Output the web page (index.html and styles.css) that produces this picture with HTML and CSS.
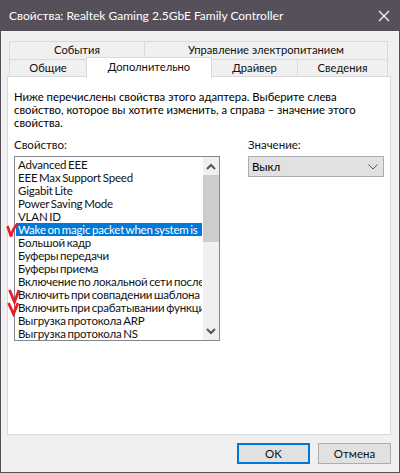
FILE: index.html
```html
<!DOCTYPE html>
<html lang="ru">
<head>
<meta charset="utf-8">
<title>Свойства</title>
<link rel="stylesheet" href="styles.css">
</head>
<body>
<div class="window">
  <header class="titlebar">
    <span class="title">Свойства: Realtek Gaming 2.5GbE Family Controller</span>
    <svg class="close" width="12" height="12" viewBox="0 0 12 12"><path d="M1 1L11 11M11 1L1 11" stroke="#fff" stroke-width="1.1" fill="none"/></svg>
  </header>
  <div class="content">
    <div class="tabs">
      <div class="tabrow top">
        <div class="tab t-events">События</div>
        <div class="tab t-power">Управление электропитанием</div>
      </div>
      <div class="tabrow bottom">
        <div class="tab t-general">Общие</div>
        <div class="tab active t-adv">Дополнительно</div>
        <div class="tab t-driver">Драйвер</div>
        <div class="tab t-info">Сведения</div>
      </div>
    </div>
    <main class="panel">
      <p class="intro">Ниже перечислены свойства этого адаптера. Выберите слева свойство, которое вы хотите изменить, а справа – значение этого свойства.</p>
      <div class="columns">
        <section class="col-left">
          <div class="label">Свойство:</div>
          <div class="listbox">
            <ul class="items">
              <li>Advanced EEE</li>
              <li>EEE Max Support Speed</li>
              <li>Gigabit Lite</li>
              <li>Power Saving Mode</li>
              <li>VLAN ID</li>
              <li class="selected">Wake on magic packet when system is</li>
              <li>Большой кадр</li>
              <li>Буферы передачи</li>
              <li>Буферы приема</li>
              <li>Включение по локальной сети после</li>
              <li>Включить при совпадении шаблона</li>
              <li>Включить при срабатывании функции</li>
              <li>Выгрузка протокола ARP</li>
              <li>Выгрузка протокола NS</li>
            </ul>
            <div class="scrollbar">
              <svg class="arrow" width="16" height="18" viewBox="0 0 16 18"><path d="M4 12L8 8L12 12" stroke="#555" stroke-width="2" fill="none"/></svg>
              <div class="track"><div class="thumb"></div></div>
              <svg class="arrow" width="16" height="17" viewBox="0 0 16 17"><path d="M4 6L8 10L12 6" stroke="#555" stroke-width="2" fill="none"/></svg>
            </div>
          </div>
        </section>
        <section class="col-right">
          <div class="label">Значение:</div>
          <div class="select">
            <span>Выкл</span>
            <svg width="10" height="6" viewBox="0 0 10 6"><path d="M0.5 0.5L5 5L9.5 0.5" stroke="#555" stroke-width="1" fill="none"/></svg>
          </div>
        </section>
      </div>
    </main>
    <footer class="buttons">
      <button class="btn default">OK</button>
      <button class="btn">Отмена</button>
    </footer>
  </div>
  <svg class="mark m1" width="18" height="18" viewBox="0 0 18 18"><path d="M1.5 4L5 14.5C6 9 8 5.5 11.5 2" stroke="#ee1c25" stroke-width="2.6" fill="none"/></svg>
  <svg class="mark m2" width="18" height="18" viewBox="0 0 18 18"><path d="M1.5 2L6.5 14L11 2" stroke="#ee1c25" stroke-width="2.8" fill="none"/></svg>
  <svg class="mark m3" width="18" height="18" viewBox="0 0 18 18"><path d="M1.5 2L6.5 13L11 2" stroke="#ee1c25" stroke-width="2.8" fill="none"/></svg>
</div>
</body>
</html>
```

FILE: styles.css
```css
* { box-sizing: border-box; }
html, body { margin: 0; padding: 0; }
body {
  width: 400px;
  height: 473px;
  overflow: hidden;
  font-family: Lato, Roboto, sans-serif;
  font-size: 11.5px;
  color: #000;
}
.window {
  position: relative;
  width: 400px;
  height: 473px;
  display: flex;
  flex-direction: column;
  background: #f0f0f0;
  border: 1px solid #55505a;
  border-top: 0;
}
.titlebar {
  flex: none;
  height: 31px;
  margin: 0 -1px;
  background: #55505a;
  color: #fff;
  display: flex;
  align-items: center;
  justify-content: space-between;
  padding: 0 10px 0 9px;
  font-size: 12px;
}
.content {
  flex: 1;
  display: flex;
  flex-direction: column;
  padding: 10px 8px 8px 6px;
}
.tabs { flex: none; display: flex; flex-direction: column; padding: 0 1px 0 2px; }
.tabrow { display: flex; height: 18px; }
.tabrow.bottom { height: 17px; position: relative; z-index: 2; }
.tab {
  background: #f0f0f0;
  border: 1px solid #d9d9d9;
  border-bottom: 0;
  margin-left: -1px;
  display: flex;
  align-items: center;
  justify-content: center;
  color: #111;
  font-size: 11.2px;
  line-height: 16px;
  padding-bottom: 1px;
}
.tab:first-child { margin-left: 0; }
.t-events { width: 136px; }
.t-power { width: 244px; }
.t-general { width: 78px; }
.t-adv { width: 126px; }
.t-driver { width: 87px; }
.t-info { width: 91px; }
.tab.active {
  height: 21px;
  margin-top: -2px;
  background: #fff;
  padding-bottom: 3px;
  position: relative;
  z-index: 3;
}
.panel {
  flex: none;
  height: 359px;
  background: #fff;
  border: 1px solid #d9d9d9;
  padding: 13px 6px 0 6px;
}
.intro {
  margin: 0;
  width: 345px;
  font-size: 11.3px;
  line-height: 13px;
}
.columns {
  display: flex;
  margin-top: 9px;
  gap: 28px;
}
.label { height: 18px; line-height: 13px; color: #111; }
.col-left { width: 206px; }
.col-right { width: 138px; }
.listbox {
  display: flex;
  gap: 1px;
  height: 185px;
  border: 1px solid #828790;
  padding: 0 0 0 1px;
  background: #fff;
}
.items {
  list-style: none;
  margin: 0;
  padding: 1px 0 0;
  flex: 1;
  min-width: 0;
  overflow: hidden;
}
.items li {
  height: 13px;
  line-height: 13px;
  padding-left: 2px;
  white-space: nowrap;
  overflow: hidden;
  word-spacing: -1px;
  letter-spacing: -0.2px;
  color: #111;
}
.items li.selected { background: #0078d7; color: #fff; }
.scrollbar {
  flex: none;
  width: 16px;
  display: flex;
  flex-direction: column;
  background: #f0f0f0;
}
.arrow { flex: none; display: block; }
.track { flex: 1; }
.thumb { height: 67px; background: #cdcdcd; }
.select {
  height: 21px;
  background: #e1e1e1;
  border: 1px solid #adadad;
  display: flex;
  align-items: center;
  justify-content: space-between;
  padding: 0 5px 0 3px;
}
.buttons {
  flex: none;
  display: flex;
  justify-content: flex-end;
  gap: 8px;
  margin-top: 8px;
}
.btn {
  width: 73px;
  height: 21px;
  background: #e1e1e1;
  border: 1px solid #adadad;
  font: inherit;
  color: #111;
  padding: 0;
}
.btn.default { border: 2px solid #0078d7; }
.mark { position: absolute; }
.m1 { left: 5px; top: 222px; }
.m2 { left: 7px; top: 288px; }
.m3 { left: 6px; top: 301px; }
```
